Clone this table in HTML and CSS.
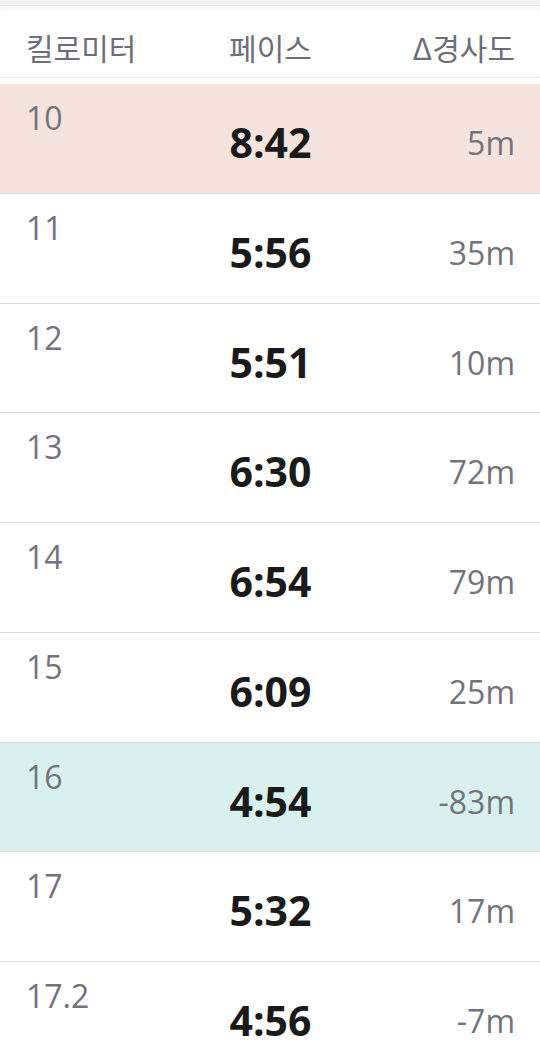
FILE: index.html
```html
<!DOCTYPE html>
<html lang="ko">
<head>
<meta charset="utf-8">
<link rel="stylesheet" href="styles.css">
</head>
<body>
<div class="topstrip"></div>
<div class="header">
  <div class="h-km">킬로미터</div>
  <div class="h-pace">페이스</div>
  <div class="h-elev">Δ경사도</div>
</div>
<div class="list">
  <div class="row slow"><div class="km">10</div><div class="pace">8:42</div><div class="elev">5m</div></div>
  <div class="row"><div class="km">11</div><div class="pace">5:56</div><div class="elev">35m</div></div>
  <div class="row"><div class="km">12</div><div class="pace">5:51</div><div class="elev">10m</div></div>
  <div class="row"><div class="km">13</div><div class="pace">6:30</div><div class="elev">72m</div></div>
  <div class="row"><div class="km">14</div><div class="pace">6:54</div><div class="elev">79m</div></div>
  <div class="row"><div class="km">15</div><div class="pace">6:09</div><div class="elev">25m</div></div>
  <div class="row fast"><div class="km">16</div><div class="pace">4:54</div><div class="elev">-83m</div></div>
  <div class="row"><div class="km">17</div><div class="pace">5:32</div><div class="elev">17m</div></div>
  <div class="row"><div class="km">17.2</div><div class="pace">4:56</div><div class="elev">-7m</div></div>
</div>
</body>
</html>
```
FILE: styles.css
```css
html, body {
  margin: 0;
  padding: 0;
  background: #ffffff;
  overflow: hidden;
}
body {
  font-family: "Open Sans", "Noto Sans CJK KR", sans-serif;
  width: 540px;
}
.topstrip {
  height: 5px;
  background: #f2f2f2;
  border-bottom: 1px solid #e6e6e6;
}
.header {
  box-sizing: border-box;
  height: 72px;
  display: grid;
  grid-template-columns: 1fr 1fr 1fr;
  padding: 0 25px 0 26px;
  background: #ffffff;
  box-shadow: inset 0 6px 6px -4px rgba(0, 0, 0, 0.05);
  border-bottom: 1px solid #e6eaea;
  font-family: "Noto Sans CJK KR", sans-serif;
  font-size: 30px;
  line-height: 30px;
  font-weight: 400;
  color: #6e6e76;
  margin-bottom: 6px;
}
.header > div {
  padding-top: 26px;
}
.h-pace { text-align: center; }
.h-elev { text-align: right; }
.row {
  box-sizing: border-box;
  height: 109.75px;
  display: grid;
  grid-template-columns: 1fr 1fr 1fr;
  align-items: start;
  padding: 0 25px 0 26px;
  border-bottom: 1px solid #dcdcdc;
}
.row.slow { background: #f5e3de; }
.row.fast { background: #d9f1ee; }
.km {
  font-size: 32px;
  line-height: 32px;
  font-weight: 400;
  padding-top: 18px;
  color: #73737b;
}
.pace {
  font-size: 41px;
  line-height: 41px;
  font-weight: 700;
  padding-top: 38px;
  text-align: center;
  color: #1a1a1a;
}
.elev {
  font-size: 32px;
  line-height: 32px;
  font-weight: 400;
  padding-top: 43px;
  text-align: right;
  color: #73737b;
}
```
